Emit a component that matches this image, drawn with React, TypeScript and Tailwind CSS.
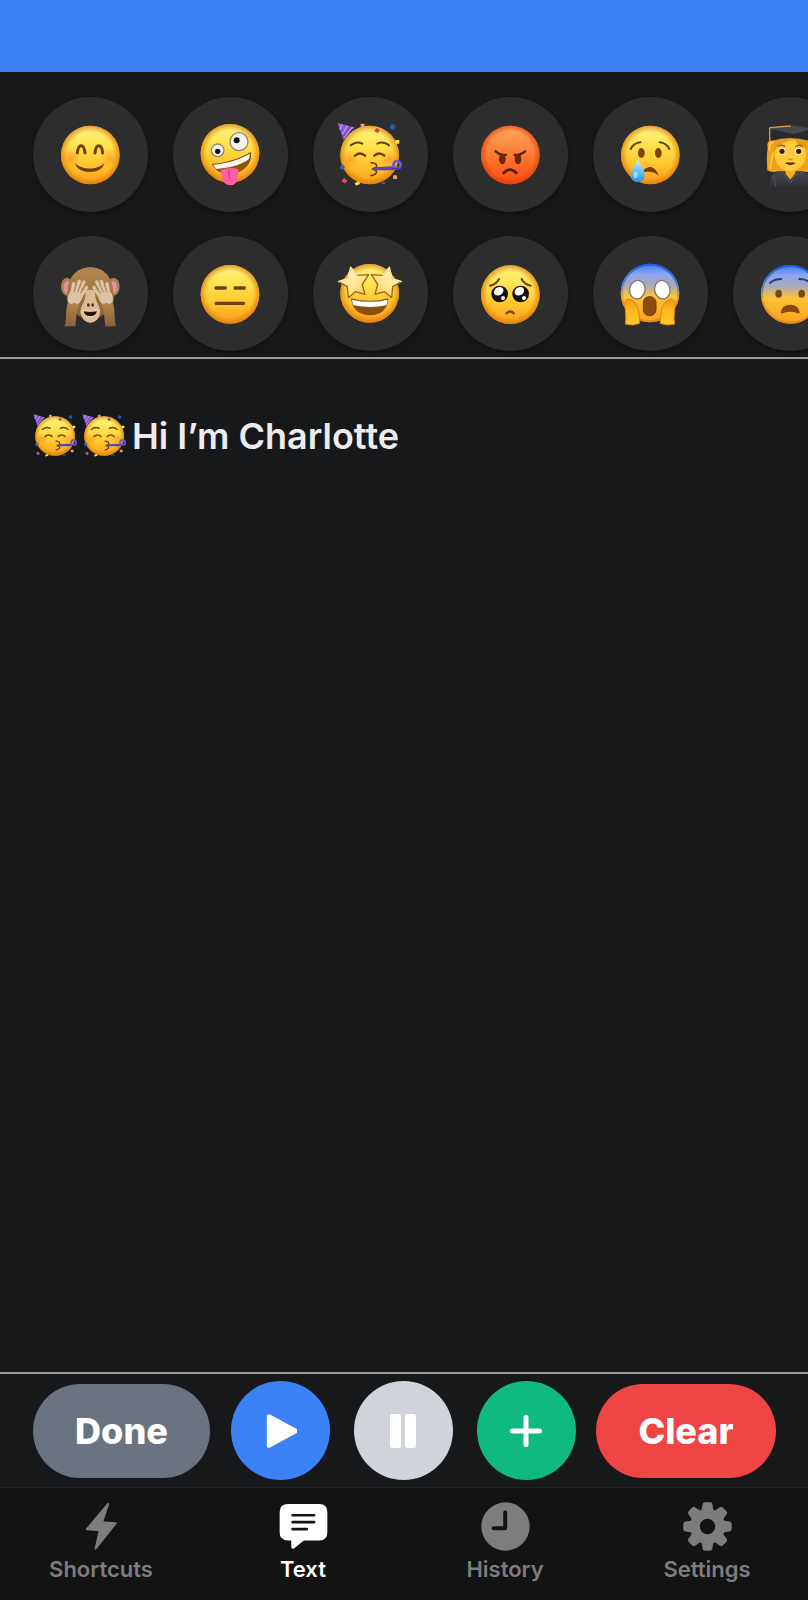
import { useState, type ReactNode } from 'react';

const BROWN = '#6e3f08';

function Defs() {
  return (
    <svg className="absolute size-0" aria-hidden="true">
      <defs>
        <linearGradient id="yellow" x1="0" y1="0" x2="0" y2="1">
          <stop offset="0" stopColor="#fff48a" />
          <stop offset="0.3" stopColor="#ffe652" />
          <stop offset="0.65" stopColor="#ffc62e" />
          <stop offset="1" stopColor="#fb9d1c" />
        </linearGradient>
        <linearGradient id="red" x1="0" y1="0" x2="0" y2="1">
          <stop offset="0" stopColor="#ffa95c" />
          <stop offset="0.5" stopColor="#fd7a31" />
          <stop offset="1" stopColor="#fb4a12" />
        </linearGradient>
        <linearGradient id="blue" x1="0" y1="0" x2="0" y2="1">
          <stop offset="0" stopColor="#3b7af2" />
          <stop offset="0.18" stopColor="#8fa6ee" />
          <stop offset="0.36" stopColor="#a9a8bd" />
          <stop offset="0.56" stopColor="#fcc436" />
          <stop offset="1" stopColor="#fba01d" />
        </linearGradient>
        <radialGradient id="edge">
          <stop offset="0.78" stopColor="#e07a08" stopOpacity="0" />
          <stop offset="1" stopColor="#d87406" stopOpacity="0.7" />
        </radialGradient>
        <radialGradient id="edgeRed">
          <stop offset="0.8" stopColor="#e03a08" stopOpacity="0" />
          <stop offset="1" stopColor="#dd3f0c" stopOpacity="0.7" />
        </radialGradient>
        <linearGradient id="edgeBlueStroke" x1="0" y1="0" x2="0" y2="1">
          <stop offset="0" stopColor="#1c5bea" />
          <stop offset="0.4" stopColor="#4a7fc9" stopOpacity="0.8" />
          <stop offset="0.6" stopColor="#e08a18" stopOpacity="0.6" />
          <stop offset="1" stopColor="#e08a18" />
        </linearGradient>
        <radialGradient id="cheek">
          <stop offset="0" stopColor="#fb7a1c" stopOpacity="0.5" />
          <stop offset="1" stopColor="#fb8a1c" stopOpacity="0" />
        </radialGradient>
        <linearGradient id="tear" x1="0" y1="0" x2="0" y2="1">
          <stop offset="0" stopColor="#d5f2ff" />
          <stop offset="0.5" stopColor="#6cc8fb" />
          <stop offset="1" stopColor="#1b96e6" />
        </linearGradient>
        <linearGradient id="star" x1="0" y1="0" x2="1" y2="1">
          <stop offset="0" stopColor="#fff6cf" />
          <stop offset="0.55" stopColor="#ffe795" />
          <stop offset="1" stopColor="#f7bd4b" />
        </linearGradient>
        <linearGradient id="hand" x1="0" y1="0" x2="0" y2="1">
          <stop offset="0" stopColor="#f59a14" />
          <stop offset="0.4" stopColor="#fdb71d" />
          <stop offset="1" stopColor="#ffcb2c" />
        </linearGradient>
        <linearGradient id="fur" x1="0" y1="0" x2="0" y2="1">
          <stop offset="0" stopColor="#b3884f" />
          <stop offset="1" stopColor="#8a6036" />
        </linearGradient>
        <linearGradient id="gown" x1="0" y1="0" x2="0" y2="1">
          <stop offset="0" stopColor="#44474f" />
          <stop offset="0.7" stopColor="#36383d" />
          <stop offset="1" stopColor="#2e2e30" />
        </linearGradient>
        <linearGradient id="hat" x1="0" y1="0" x2="1" y2="1">
          <stop offset="0" stopColor="#a467e8" />
          <stop offset="1" stopColor="#4a3cb8" />
        </linearGradient>
      </defs>
    </svg>
  );
}

function Face({ cx = 0, cy = 0, tone = 'yellow' }: { cx?: number; cy?: number; tone?: 'yellow' | 'red' | 'blue' }) {
  const fill = { yellow: 'url(#yellow)', red: 'url(#red)', blue: 'url(#blue)' }[tone];
  return (
    <>
      <circle cx={cx} cy={cy} r="88" fill={fill} />
      {tone === 'blue' ? (
        <circle cx={cx} cy={cy} r="85" fill="none" stroke="url(#edgeBlueStroke)" strokeWidth="6" />
      ) : (
        <circle cx={cx} cy={cy} r="88" fill={tone === 'red' ? 'url(#edgeRed)' : 'url(#edge)'} />
      )}
    </>
  );
}

function Line({ d, w = 6, color = BROWN }: { d: string; w?: number; color?: string }) {
  return <path d={d} fill="none" stroke={color} strokeWidth={w} strokeLinecap="round" strokeLinejoin="round" />;
}

const smile = (
  <>
    <Face />
    <circle cx="-60" cy="10" r="30" fill="url(#cheek)" />
    <circle cx="60" cy="10" r="30" fill="url(#cheek)" />
    <Line d="M-39-6C-36-35-19-35-16-6" w={9} />
    <Line d="M14-6C17-35 34-35 37-6" w={9} />
    <path d="M-46 24C-26 46 22 46 42 24C36 60-38 60-46 24Z" fill={BROWN} />
  </>
);

const zany = (
  <>
    <Face cx={-1} cy={-5} />
    <circle cx="-38" cy="-14" r="19" fill="#f4f2ee" stroke="#8f8a6c" strokeWidth="4" />
    <circle cx="-38" cy="-11" r="8" fill="#111" />
    <circle cx="26" cy="-40" r="27" fill="#f4f2ee" stroke="#8f8a6c" strokeWidth="4" />
    <circle cx="19" cy="-44" r="9" fill="#111" />
    <path d="M-53 28C-18 26 32 12 60-7C65 30 32 55-2 54C-28 54-46 46-53 28Z" fill="#94530c" stroke="#6e3f08" strokeWidth="3" />
    <path d="M-51 29C-18 27 32 13 58-4Q59 6 55 13C30 32-10 40-43 42Q-49 36-51 29Z" fill="#fbf8f4" />
    <path d="M-29 45Q-2 34 25 43L20 74Q16 91 0 91Q-19 90-23 72Z" fill="#fd5ea6" />
    <Line d="M-4 44L-3 70" w={3} color="#c9307a" />
  </>
);

const party = (
  <>
    <Face cx={-2} />
    <circle cx="-62" cy="14" r="28" fill="url(#cheek)" />
    <circle cx="58" cy="14" r="28" fill="url(#cheek)" />
    <path d="M-98-96L-45-82Q-70-72-80-42Z" fill="url(#hat)" />
    <path d="M-84-92L-92-76M-68-88L-84-62M-53-84L-80-50" stroke="#d58bee" strokeWidth="4" fill="none" />
    <Line d="M-59-29Q-42-43-24-34M21-34Q40-43 56-29" />
    <Line d="M-46 2Q-30-11-16 2M12 2Q28-11 42 2" w={7} />
    <Line d="M2 23C24 25 24 38 6 42C24 46 22 58 2 62" w={5} />
    <path d="M9 37L66 34L70 46L9 46Z" fill="#4f48b8" />
    <circle cx="80" cy="29" r="11" fill="none" stroke="#6a5bd0" strokeWidth="8" />
    <Line d="M68 41L90 41" w={5} color="#3e3aa8" />
    <rect x="-29" y="-94" width="11" height="10" rx="2" fill="#f4a95a" />
    <rect x="14" y="-79" width="12" height="11" rx="2" fill="#d9362f" transform="rotate(30 20 -73)" />
    <circle cx="67" cy="-84" r="8" fill="#2859a8" />
    <rect x="75" y="-45" width="12" height="11" rx="2" fill="#ffe04a" />
    <circle cx="-84" cy="37" r="7" fill="#2d63b8" />
    <rect x="-84" y="71" width="13" height="12" rx="2" fill="#dd4672" transform="rotate(35 -78 77)" />
    <rect x="-46" y="81" width="14" height="9" rx="2" fill="#ffe04a" transform="rotate(-20 -39 85)" />
    <path d="M30 87L40 78L46 87Z" fill="#3b5bc4" />
    <rect x="68" y="61" width="12" height="11" rx="2" fill="#f1a15c" />
  </>
);

const angry = (
  <>
    <Face tone="red" />
    <Line d="M-44-11Q-32 0-13 0M44-11Q32 0 13 0" w={7} color="#5a1f08" />
    <ellipse cx="-24" cy="12" rx="10" ry="16" fill="#6b2608" />
    <ellipse cx="23" cy="12" rx="10" ry="16" fill="#6b2608" />
    <Line d="M-20 54Q-1 34 18 54" w={8} color="#5a1f08" />
  </>
);

const cry = (
  <>
    <Face />
    <Line d="M-59-18Q-50-36-30-38M57-18Q48-36 28-38" />
    <ellipse cx="-27" cy="-6" rx="10" ry="15" fill="#7a4509" />
    <ellipse cx="24" cy="-6" rx="10" ry="15" fill="#7a4509" />
    <path d="M-18 44Q8 26 23 58Q2 44-18 50Z" fill={BROWN} stroke={BROWN} strokeWidth="3" strokeLinejoin="round" />
    <path d="M-37 10C-30 34-17 44-17 61A21 21 0 0 1-59 61C-59 44-44 34-37 10Z" fill="url(#tear)" />
    <ellipse cx="-44" cy="60" rx="6" ry="10" fill="#e9f8ff" opacity="0.6" />
  </>
);

const graduate = (
  <>
    <path d="M-48-50Q-74-44-68-22Q-72 0-69 46Q-58 54-36 49L36 49Q58 54 69 46Q72 0 68-22Q74-44 48-50Z" fill="#eea31b" />
    <path d="M-63-12Q-66-36-48-42M-60 42Q-58 10-50-8" stroke="#ffc545" strokeWidth="6" fill="none" />
    <path d="M-62 96Q-68 58-36 51L36 51Q68 58 62 96Z" fill="url(#gown)" />
    <path d="M-52 62Q-44 76-44 94M-20 56L0 84L20 56" stroke="#54575f" strokeWidth="3" fill="none" />
    <path d="M-17 44L17 44L13 58L0 74L-13 58Z" fill="#f2ac20" />
    <ellipse cx="0" cy="-1" rx="47" ry="49" fill="#ffcb3c" />
    <path d="M-49 4Q-50-36 14-46Q24-28 49-18L50-54L-50-54Z" fill="#e89d1a" />
    <path d="M-54-76L-58-42Q0-60 58-42L54-76Z" fill="#28292c" />
    <path d="M-68-80L0-89L68-80L12-62Z" fill="#46474b" />
    <Line d="M0-87L-62-82L-62-46" w={4} color="#c99a52" />
    <Line d="M-36-27Q-26-32-17-26M17-26Q26-32 36-27" w={4} color="#9a5d0c" />
    <circle cx="-25" cy="-11" r="10" fill="#fff" />
    <circle cx="-25" cy="-11" r="8" fill="#3b1d07" />
    <circle cx="25" cy="-11" r="10" fill="#fff" />
    <circle cx="25" cy="-11" r="8" fill="#3b1d07" />
    <Line d="M-5 12Q0 15 5 12" w={4} color="#d98d18" />
    <path d="M-16 25Q-6 20 0 23Q6 20 16 25Q0 36-16 25Z" fill="#6b1f14" />
  </>
);

const monkeyArm = (
  <>
    <path d="M-77 97C-70 76-76 46-66 22L-32 28C-42 52-42 74-45 97Z" fill="url(#fur)" />
    <path d="M-67 24Q-70 4-60-6L-26-10Q-18 8-32 26L-40 31L-48 26L-57 31Z" fill="#dcc3a6" />
    <path d="M-56 0L-50-31M-46-4L-33-38M-37-2L-19-36M-26 4L-11-20" stroke="#dcc3a6" strokeWidth="10" strokeLinecap="round" />
    <path d="M-49-6L-42-28M-39-6L-28-28M-30-2L-17-20" stroke="#a8845a" strokeWidth="3" strokeLinecap="round" />
  </>
);

const monkey = (
  <>
    <ellipse cx="-70" cy="-22" rx="18" ry="27" fill="#a5815c" />
    <ellipse cx="-69" cy="-20" rx="11" ry="19" fill="#e58f9f" />
    <ellipse cx="70" cy="-22" rx="18" ry="27" fill="#a5815c" />
    <ellipse cx="69" cy="-20" rx="11" ry="19" fill="#e58f9f" />
    <path d="M0-80C40-80 66-50 68-12C78 20 62 54 22 72L-22 72C-62 54-78 20-68-12C-66-50-40-80 0-80Z" fill="url(#fur)" />
    <path d="M-14-10Q0-16 14-10C12 22 30 34 30 55Q24 86 0 86Q-24 86-30 55C-30 34-12 22-14-10Z" fill="#dcbc97" />
    <ellipse cx="-6" cy="33" rx="4" ry="5" fill="#4a2a12" />
    <ellipse cx="7" cy="33" rx="4" ry="5" fill="#4a2a12" />
    <path d="M-22 50Q0 54 22 50Q18 68 0 68Q-19 68-22 50Z" fill="#2e0f08" stroke="#f3dfc6" strokeWidth="3" />
    {monkeyArm}
    <g transform="scale(-1 1)">{monkeyArm}</g>
  </>
);

const expressionless = (
  <>
    <Face cx={-1} cy={1} />
    <rect x="-47" y="-23" width="36" height="10" rx="3" fill={BROWN} />
    <rect x="10" y="-23" width="36" height="10" rx="3" fill={BROWN} />
    <rect x="-47" y="23" width="91" height="10" rx="4" fill={BROWN} />
  </>
);

const starPath = 'M-96-37L-68-46L-59-80L-38-56L-5-58L-24-29L-16 1L-45-7L-66 11L-69-22Z';

const starStruck = (
  <>
    <Face cx={-2} cy={-2} />
    <path d="M-58 13Q0 28 55 13Q50 63-1 64Q-52 63-58 13Z" fill="#8c4f0c" />
    <path d="M-55 17Q0 30 52 17Q51 27 48 34Q0 44-50 34Q-54 27-55 17Z" fill="#fff" />
    <path d={starPath} fill="url(#star)" stroke="#a2640f" strokeWidth="4" strokeLinejoin="round" />
    <path d={starPath} transform="translate(-2 0) scale(-1 1)" fill="url(#star)" stroke="#a2640f" strokeWidth="4" strokeLinejoin="round" />
    <path d="M-96-37L-68-46L-59-80L-38-56" fill="none" stroke="#fff2b8" strokeWidth="4" />
    <path d="M94-37L66-46L57-80L36-56" fill="none" stroke="#fff2b8" strokeWidth="4" />
  </>
);

const pleading = (
  <>
    <Face cy={2} />
    <Line d="M-61-25Q-42-29-34-45M61-25Q42-29 34-45" />
    <circle cx="-32" cy="0" r="25" fill="#17110c" />
    <circle cx="31" cy="0" r="25" fill="#17110c" />
    <ellipse cx="-35" cy="-8" rx="15" ry="12" fill="#fff" transform="rotate(-30 -35 -8)" />
    <ellipse cx="27" cy="-8" rx="15" ry="12" fill="#fff" transform="rotate(-30 27 -8)" />
    <circle cx="-22" cy="12" r="6" fill="#fff" />
    <circle cx="41" cy="12" r="6" fill="#fff" />
    <Line d="M-11 58Q-1 46 10 58" w={7} />
  </>
);

const screamHand = <path d="M-76 27Q-75 15-62 16C-42 20-32 44-32 88Q-52 97-75 90C-70 66-77 48-76 27Z" fill="url(#hand)" stroke="#df8613" strokeWidth="3" />;

const scream = (
  <>
    <Face cx={-1} cy={-3} tone="blue" />
    <ellipse cx="-39" cy="-13" rx="23" ry="28" fill="#fff" stroke="#7d7a72" strokeWidth="4" transform="rotate(12 -39 -13)" />
    <ellipse cx="36" cy="-13" rx="23" ry="28" fill="#fff" stroke="#7d7a72" strokeWidth="4" transform="rotate(-12 36 -13)" />
    <rect x="-21" y="8" width="38" height="57" rx="18" fill="#8d4a0d" stroke="#6d3a0a" strokeWidth="3" />
    {screamHand}
    <g transform="translate(-2 0) scale(-1 1)">{screamHand}</g>
  </>
);

const fearful = (
  <>
    <Face cy={1} tone="blue" />
    <Line d="M-61-33Q-48-45-27-45M61-33Q48-45 27-45" color="#21437f" />
    <ellipse cx="-35" cy="-1" rx="10" ry="12" fill="#7a4a10" />
    <ellipse cx="34" cy="-1" rx="10" ry="12" fill="#7a4a10" />
    <path d="M-29 56Q-26 32 0 32Q25 32 28 56Q26 60 20 57Q0 50-20 57Q-27 60-29 56Z" fill="#86480e" />
  </>
);

function Emoji({ art, className }: { art: ReactNode; className: string }) {
  return (
    <svg viewBox="-100 -102 204 204" className={className} aria-hidden="true">
      {art}
    </svg>
  );
}

const emojiRows: { name: string; art: ReactNode }[][] = [
  [
    { name: 'Happy', art: smile },
    { name: 'Silly', art: zany },
    { name: 'Celebrate', art: party },
    { name: 'Angry', art: angry },
    { name: 'Sad', art: cry },
    { name: 'Graduate', art: graduate },
  ],
  [
    { name: 'Embarrassed', art: monkey },
    { name: 'Unimpressed', art: expressionless },
    { name: 'Excited', art: starStruck },
    { name: 'Pleading', art: pleading },
    { name: 'Shocked', art: scream },
    { name: 'Afraid', art: fearful },
  ],
];

const toothAngles = [0, 45, 90, 135, 180, 225, 270, 315];

const tabs: { label: string; icon: ReactNode }[] = [
  {
    label: 'Shortcuts',
    icon: (
      <path d="M94 6L76 61L117 64L56 141L69 85L30 82Z" fill="currentColor" stroke="currentColor" strokeWidth="6" strokeLinejoin="round" />
    ),
  },
  {
    label: 'Text',
    icon: (
      <>
        <path
          d="M28 6H122Q146 6 146 30V92Q146 116 122 116H75L46 140Q37 145 37 134V116H28Q2 116 2 92V30Q2 6 28 6Z"
          fill="currentColor"
        />
        <path d="M41 40H106M41 61H106M41 82H84" stroke="#131313" strokeWidth="8" strokeLinecap="round" />
      </>
    ),
  },
  {
    label: 'History',
    icon: (
      <>
        <circle cx="74" cy="74" r="73" fill="currentColor" />
        <path d="M73 32V79H38" fill="none" stroke="#131313" strokeWidth="12" strokeLinecap="round" strokeLinejoin="round" />
      </>
    ),
  },
  {
    label: 'Settings',
    icon: (
      <>
        <circle cx="74" cy="74" r="38" fill="none" stroke="currentColor" strokeWidth="29" />
        {toothAngles.map((a) => (
          <path key={a} d="M52 32Q58 24 59 8Q60 1 66 1H82Q88 1 89 8Q90 24 96 32Z" fill="currentColor" transform={`rotate(${a} 74 74)`} />
        ))}
      </>
    ),
  },
];

export default function App() {
  const [text, setText] = useState('Hi I’m Charlotte');
  const [active, setActive] = useState('Text');

  return (
    <div className="flex min-h-screen flex-col bg-[#17181a] font-['Inter',sans-serif]">
      <Defs />
      <header className="h-18 bg-[#3b82f6]" />

      <section aria-label="Emotions" className="flex flex-col gap-6 overflow-hidden border-b-2 border-[#9a9a9b] pt-[25px] pb-[6px] pl-[33px]">
        {emojiRows.map((row, i) => (
          <div key={i} className="flex gap-[25px]">
            {row.map(({ name, art }) => (
              <button
                key={name}
                type="button"
                aria-label={name}
                className="flex size-[115px] shrink-0 items-center justify-center rounded-full bg-[#2d2d2d] shadow-md shadow-black/20"
              >
                <Emoji art={art} className="size-[68px]" />
              </button>
            ))}
          </div>
        ))}
      </section>

      <main className="flex flex-1 px-[33px] pt-[54px]">
        <div className="flex shrink-0 gap-[3px] pr-1">
          <Emoji art={party} className="size-[46px]" />
          <Emoji art={party} className="size-[46px]" />
        </div>
        <textarea
          aria-label="Message"
          value={text}
          onChange={(e) => setText(e.target.value)}
          className="min-w-0 flex-1 resize-none bg-transparent text-[36px] leading-[46px] font-semibold text-[#ececef] outline-none"
        />
      </main>

      <section aria-label="Playback" className="flex items-center justify-between border-t-2 border-[#9a9a9b] pt-[7px] pr-8 pb-[7px] pl-[33px]">
        <button type="button" className="h-[94px] w-[177px] rounded-full bg-[#6b7280] text-[36px] font-extrabold text-white">
          Done
        </button>
        <div className="flex gap-6">
          <button type="button" aria-label="Play" className="flex size-[99px] items-center justify-center rounded-full bg-[#3b82f6]">
            <svg viewBox="-51 -51 102 102" className="size-[34px]" aria-hidden="true">
              <path d="M-33-44L47 0L-33 44Z" fill="#fff" stroke="#fff" strokeWidth="13" strokeLinejoin="round" />
            </svg>
          </button>
          <button type="button" aria-label="Pause" className="flex size-[99px] items-center justify-center gap-1 rounded-full bg-[#d1d3db]">
            <span className="h-[34px] w-[11px] rounded-xs bg-white" />
            <span className="h-[34px] w-[11px] rounded-xs bg-white" />
          </button>
          <button type="button" aria-label="Add" className="flex size-[99px] items-center justify-center rounded-full bg-[#10b981]">
            <svg viewBox="0 0 32 32" className="size-8" aria-hidden="true">
              <path d="M16 2.5V29.5M2.5 16H29.5" stroke="#fff" strokeWidth="5" strokeLinecap="round" />
            </svg>
          </button>
        </div>
        <button type="button" className="h-[94px] w-[180px] rounded-full bg-[#ef4444] text-[36px] font-extrabold text-white">
          Clear
        </button>
      </section>

      <nav className="grid h-[113px] grid-cols-4 border-t border-[#232324] bg-[#131313]">
        {tabs.map(({ label, icon }) => (
          <button
            key={label}
            type="button"
            aria-current={active === label ? 'page' : undefined}
            onClick={() => setActive(label)}
            className={`flex flex-col items-center gap-1 pt-[14px] text-[22px] leading-[28px] font-semibold ${
              active === label ? 'text-white' : 'text-[#7d7d7f]'
            }`}
          >
            <svg viewBox="0 0 148 148" className="size-[49px]" aria-hidden="true">
              {icon}
            </svg>
            {label}
          </button>
        ))}
      </nav>
    </div>
  );
}
